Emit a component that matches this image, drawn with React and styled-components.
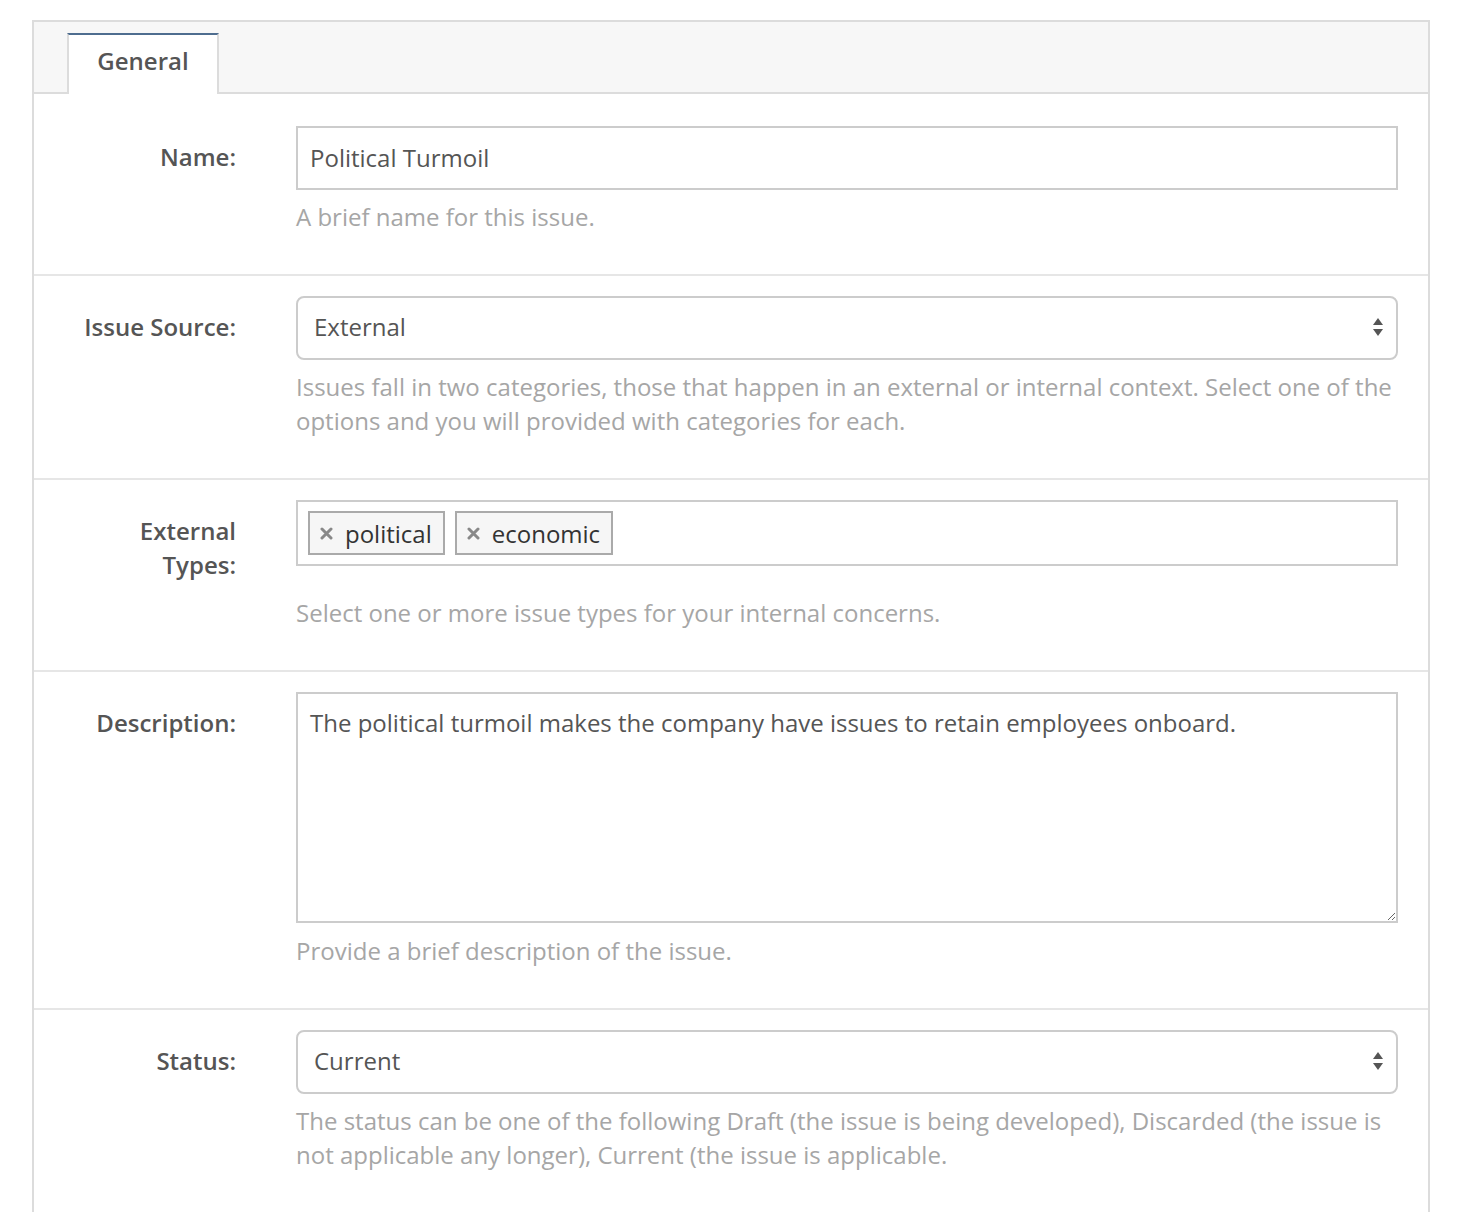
import React from "react";
import styled, { createGlobalStyle } from "styled-components";

const Global = createGlobalStyle`
  html, body { margin: 0; padding: 0; background: #fff; }
  body { font-family: "Open Sans", "Noto Sans", sans-serif; color: #555; }
  * { box-sizing: border-box; }
`;

const Panel = styled.div`
  margin: 20px 0 0 32px;
  width: 1398px;
  border: 2px solid #dcdcdc;
  border-bottom: none;
  background: #fff;
`;

const TabBar = styled.div`
  display: flex;
  align-items: flex-end;
  height: 72px;
  padding: 11px 0 0 33px;
  background: #f7f7f7;
  border-bottom: 2px solid #dcdcdc;
`;

const Tab = styled.div`
  width: 152px;
  height: 61px;
  margin-bottom: -2px;
  background: #fff;
  border: 2px solid #dcdcdc;
  border-top: 2px solid #4e6d8f;
  border-bottom: none;
  display: flex;
  align-items: center;
  justify-content: center;
  padding-bottom: 8px;
  font-size: 24px;
  font-weight: 600;
  color: #555;
`;

const Body = styled.div`
  padding-top: 12px;
`;

const Row = styled.div`
  display: grid;
  grid-template-columns: 202px 1102px;
  column-gap: 60px;
  padding: 20px 30px 40px 0;
  & + & {
    border-top: 2px solid #e6e6e6;
  }
`;

const Label = styled.label`
  padding: 14px 0 0 36px;
  text-align: right;
  font-size: 24px;
  line-height: 34px;
  font-weight: 600;
  color: #555;
`;

const Field = styled.div`
  display: flex;
  flex-direction: column;
`;

const TextInput = styled.div`
  height: 64px;
  border: 2px solid #cccccc;
  padding: 0 12px 2px;
  display: flex;
  align-items: center;
  font-size: 24px;
  color: #555;
`;

const Select = styled.div`
  height: 64px;
  border: 2px solid #cccccc;
  border-radius: 8px;
  padding: 0 12px 3px 16px;
  display: flex;
  align-items: center;
  justify-content: space-between;
  font-size: 24px;
  color: #555;
`;

const TagBox = styled.div`
  height: 66px;
  border: 2px solid #cccccc;
  padding: 10px;
  display: flex;
  align-items: center;
  gap: 10px;
`;

const Tag = styled.span`
  height: 44px;
  display: inline-flex;
  align-items: center;
  gap: 12px;
  padding: 0 11px 0 10px;
  background: #f6f6f6;
  border: 2px solid #aaaaaa;
  font-size: 24px;
  color: #333;

  svg {
    flex: none;
  }
`;

const TextArea = styled.textarea`
  height: 231px;
  border: 2px solid #cccccc;
  border-radius: 0;
  padding: 12px;
  font-family: inherit;
  font-size: 24px;
  line-height: 34px;
  color: #555;
  resize: vertical;
  outline: none;
`;

const Help = styled.p`
  margin: ${(p) => p.$top || 10}px 0 0;
  font-size: 24px;
  line-height: 34px;
  color: #a6a6a6;
`;

const Arrows = () => (
  <svg width="12" height="20" viewBox="0 0 12 20" aria-hidden="true">
    <path d="M6 1 L11 8 L1 8 Z" fill="#555" />
    <path d="M6 19 L11 12 L1 12 Z" fill="#555" />
  </svg>
);

const Cross = () => (
  <svg width="13" height="13" viewBox="0 0 13 13" aria-hidden="true">
    <path d="M2 2 L11 11 M11 2 L2 11" stroke="#888" strokeWidth="3" strokeLinecap="round" />
  </svg>
);

export default function App() {
  return (
    <>
      <Global />
      <Panel>
        <TabBar>
          <Tab>General</Tab>
        </TabBar>
        <Body>
          <Row>
            <Label>Name:</Label>
            <Field>
              <TextInput>Political Turmoil</TextInput>
              <Help>A brief name for this issue.</Help>
            </Field>
          </Row>
          <Row>
            <Label>Issue Source:</Label>
            <Field>
              <Select>
                External
                <Arrows />
              </Select>
              <Help>
                Issues fall in two categories, those that happen in an external or internal context. Select one of the
                options and you will provided with categories for each.
              </Help>
            </Field>
          </Row>
          <Row>
            <Label>External Types:</Label>
            <Field>
              <TagBox>
                <Tag>
                  <Cross />
                  political
                </Tag>
                <Tag>
                  <Cross />
                  economic
                </Tag>
              </TagBox>
              <Help $top={30}>Select one or more issue types for your internal concerns.</Help>
            </Field>
          </Row>
          <Row>
            <Label>Description:</Label>
            <Field>
              <TextArea
                readOnly
                defaultValue="The political turmoil makes the company have issues to retain employees onboard."
              />
              <Help $top={11}>Provide a brief description of the issue.</Help>
            </Field>
          </Row>
          <Row>
            <Label>Status:</Label>
            <Field>
              <Select>
                Current
                <Arrows />
              </Select>
              <Help>
                The status can be one of the following Draft (the issue is being developed), Discarded (the issue is
                not applicable any longer), Current (the issue is applicable.
              </Help>
            </Field>
          </Row>
        </Body>
      </Panel>
    </>
  );
}
